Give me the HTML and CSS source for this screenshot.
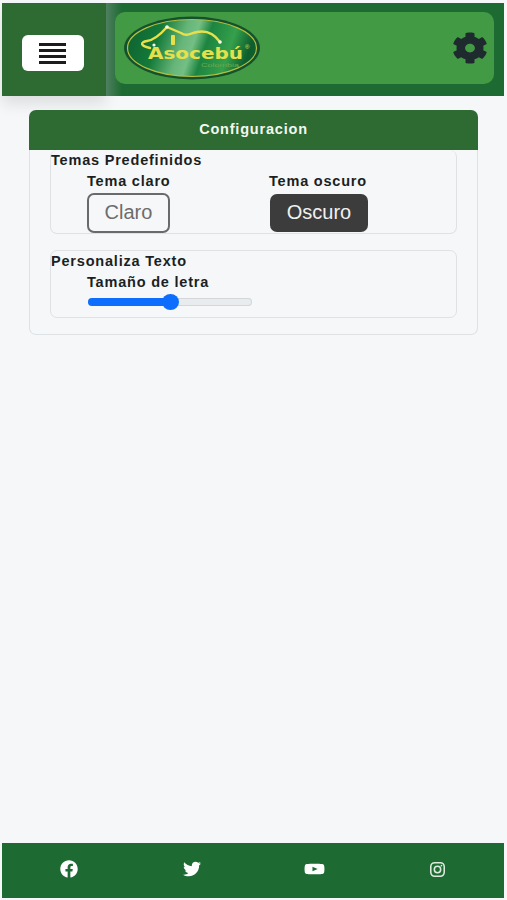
FILE: index.html
```html
<!DOCTYPE html>
<html lang="es">
<head>
    <meta charset="UTF-8">
    <meta name="viewport" content="width=device-width, initial-scale=1.0">
    <title>Configuracion</title>
    <link rel="stylesheet" href="styles.css">
</head>
<body>
    <div class="app">
        <header class="topbar">
            <div class="menu-side">
                <button class="menu-btn" type="button" aria-label="Menu">
                    <span></span><span></span><span></span><span></span>
                </button>
            </div>
            <div class="brand-side">
                <div class="brand-bar">
                    <svg class="logo" viewBox="0 0 138 64" aria-label="Asocebú Colombia">
                        <defs>
                            <linearGradient id="logoFill" x1="0" x2="1" y1="0" y2="0.15">
                                <stop offset="0" stop-color="#0e5f2e"/>
                                <stop offset="0.28" stop-color="#137a3a"/>
                                <stop offset="0.47" stop-color="#66b578"/>
                                <stop offset="0.56" stop-color="#74bf84"/>
                                <stop offset="0.66" stop-color="#1c8440"/>
                                <stop offset="0.85" stop-color="#35a04c"/>
                                <stop offset="1" stop-color="#0e5f2e"/>
                            </linearGradient>
                        </defs>
                        <ellipse cx="69" cy="32" rx="68" ry="31.5" fill="#14512c"/>
                        <ellipse cx="69" cy="32" rx="64.5" ry="28.5" fill="url(#logoFill)" stroke="#b4c03e" stroke-width="1.2"/>
                        <path class="logo-line" d="M27 32 C17 30 17 26 24 25 C31 24 37 19 44 11 L58 17 C64 21 68 17 74 16 C84 14 92 19 97 26"/>
                        <rect x="48" y="19" width="4" height="10" rx="1" fill="#e8e04a"/>
                        <circle class="logo-spark" cx="44" cy="11" r="1.8"/>
                        <circle class="logo-spark" cx="31" cy="29" r="1.6"/>
                        <circle class="logo-spark" cx="97" cy="26" r="1.8"/>
                        <circle class="logo-spark" cx="117" cy="40" r="1.3"/>
                        <text class="logo-name" x="25" y="43" textLength="95" lengthAdjust="spacingAndGlyphs">Asocebú</text>
                        <text class="logo-reg" x="122" y="33">®</text>
                        <text class="logo-sub" x="78" y="51" textLength="38" lengthAdjust="spacingAndGlyphs">Colombia</text>
                    </svg>
                    <svg class="gear" viewBox="0 0 512 512" preserveAspectRatio="none" aria-label="Ajustes">
                        <path d="M487.4 315.7l-42.6-24.6c4.3-23.2 4.3-47 0-70.2l42.6-24.6c4.9-2.8 7.1-8.6 5.5-14-11.1-35.6-30-67.8-54.7-94.6-3.8-4.1-10-5.1-14.8-2.3L380.8 110c-17.9-15.4-38.5-27.3-60.8-35.1V25.8c0-5.6-3.9-10.5-9.4-11.7-36.7-8.2-74.3-7.8-109.2 0-5.5 1.2-9.4 6.1-9.4 11.7V75c-22.2 7.9-42.8 19.8-60.8 35.1L88.7 85.5c-4.9-2.8-11-1.9-14.8 2.3-24.7 26.7-43.6 58.9-54.7 94.6-1.7 5.4.6 11.2 5.5 14L67.3 221c-4.3 23.2-4.3 47 0 70.2l-42.6 24.6c-4.9 2.8-7.1 8.6-5.5 14 11.1 35.6 30 67.8 54.7 94.6 3.8 4.1 10 5.1 14.8 2.3l42.6-24.6c17.9 15.4 38.5 27.3 60.8 35.1v49.2c0 5.6 3.9 10.5 9.4 11.7 36.7 8.2 74.3 7.8 109.2 0 5.5-1.2 9.4-6.1 9.4-11.7v-49.2c22.2-7.9 42.8-19.8 60.8-35.1l42.6 24.6c4.9 2.8 11 1.9 14.8-2.3 24.7-26.7 43.6-58.9 54.7-94.6 1.5-5.5-.7-11.3-5.6-14.1zM256 326c-38.6 0-70-31.4-70-70s31.4-70 70-70 70 31.4 70 70-31.4 70-70 70z"/>
                    </svg>
                </div>
            </div>
        </header>

        <main class="content">
            <section class="card">
                <h1 class="card-title">Configuracion</h1>
                <div class="card-body">
                    <div class="group">
                        <h2 class="group-title">Temas Predefinidos</h2>
                        <div class="theme-row">
                            <div class="theme-col theme-light">
                                <label class="field-label">Tema claro</label>
                                <button class="btn btn-light" type="button">Claro</button>
                            </div>
                            <div class="theme-col">
                                <label class="field-label">Tema oscuro</label>
                                <button class="btn btn-dark" type="button">Oscuro</button>
                            </div>
                        </div>
                    </div>
                    <div class="group group-text">
                        <h2 class="group-title">Personaliza Texto</h2>
                        <div class="range-field">
                            <label class="field-label">Tamaño de letra</label>
                            <div class="range">
                                <div class="range-fill" style="width: 50%"></div>
                                <div class="range-thumb"></div>
                            </div>
                        </div>
                    </div>
                </div>
            </section>
        </main>

        <footer class="footer">
            <svg class="social" viewBox="0 0 512 512" aria-label="Facebook"><path d="M504 256C504 119 393 8 256 8S8 119 8 256c0 123.8 90.7 226.4 209.3 245V327.7h-63V256h63v-54.6c0-62.2 37-96.5 93.7-96.5 27.1 0 55.5 4.8 55.5 4.8v61h-31.3c-30.8 0-40.4 19.1-40.4 38.7V256h68.8l-11 71.7h-57.8V501C413.3 482.4 504 379.8 504 256z"/></svg>
            <svg class="social" viewBox="0 0 512 512" aria-label="Twitter"><path d="M459.4 151.7c.3 4.5.3 9.1.3 13.6 0 138.7-105.6 298.6-298.6 298.6-59.5 0-114.7-17.2-161.1-47.1 8.4 1 16.6 1.3 25.3 1.3 49.1 0 94.2-16.6 130.3-44.8-46.1-1-84.8-31.2-98.1-72.8 6.5 1 13 1.6 19.8 1.6 9.4 0 18.8-1.3 27.6-3.6-48.1-9.7-84.1-52-84.1-103v-1.3c14 7.8 30.2 12.7 47.4 13.3-28.3-18.8-46.8-51-46.8-87.4 0-19.5 5.2-37.4 14.3-53 51.7 63.7 129.3 105.3 216.4 109.8-1.6-7.8-2.6-15.9-2.6-24 0-57.8 46.8-104.9 104.9-104.9 30.2 0 57.5 12.7 76.7 33.1 23.7-4.5 46.5-13.3 66.6-25.3-7.8 24-24.4 44.8-46.1 57.8 21.1-2.3 41.6-8.1 60.4-16.2-14.3 20.8-32.2 39.3-52.6 54.3z"/></svg>
            <svg class="social social-yt" viewBox="0 0 576 512" preserveAspectRatio="none" aria-label="YouTube"><path d="M549.7 124.1c-6.3-23.7-24.8-42.3-48.3-48.6C458.8 64 288 64 288 64S117.2 64 74.6 75.5c-23.5 6.3-42 24.9-48.3 48.6C14.9 167 14.9 256.4 14.9 256.4s0 89.4 11.4 132.3c6.3 23.7 24.8 41.5 48.3 47.8C117.2 448 288 448 288 448s170.8 0 213.4-11.5c23.5-6.3 42-24.2 48.3-47.8 11.4-42.9 11.4-132.3 11.4-132.3s0-89.4-11.4-132.3zM232.1 337.6V175.2l142.7 81.2-142.7 81.2z"/></svg>
            <svg class="social social-insta" viewBox="0 0 24 24" aria-label="Instagram"><rect x="2.5" y="2.5" width="19" height="19" rx="5.5"/><circle cx="12" cy="12" r="4.5"/><circle class="insta-dot" cx="17.6" cy="6.4" r="1.2"/></svg>
        </footer>
    </div>
</body>
</html>
```

FILE: styles.css
```css
* {
    box-sizing: border-box;
}
body {
    margin: 0;
    font-family: "Liberation Sans", Arial, sans-serif;
    background-color: #f5f7f9;
    color: #1c1f22;
}
.app {
    display: flex;
    flex-direction: column;
    height: 900px;
    padding: 3px 3px 2px 2px;
}
.topbar {
    display: flex;
    height: 93px;
    background-color: #1d6a32;
}
.menu-side {
    width: 104px;
    display: flex;
    align-items: center;
    justify-content: center;
    padding: 7px 3px 0 0;
    background-color: #2d6b33;
    box-shadow: 0 8px 14px rgba(0, 0, 0, 0.1);
}
.menu-btn {
    width: 62px;
    height: 36px;
    display: flex;
    flex-direction: column;
    align-items: center;
    justify-content: center;
    gap: 3px;
    padding: 0;
    border: 0;
    border-radius: 6px;
    background-color: #fff;
}
.menu-btn span {
    display: block;
    width: 27px;
    height: 3px;
    background-color: #1c1c1c;
}
.brand-side {
    flex: 1;
    padding: 9px 10px 12px 9px;
    background: linear-gradient(to right, #4f8060 0, #1d6a32 16px);
}
.brand-bar {
    height: 72px;
    display: flex;
    align-items: center;
    justify-content: space-between;
    padding: 0 6px 0 8px;
    border-radius: 10px;
    background-color: #439a45;
}
.logo {
    width: 138px;
    height: 64px;
}
.logo-line {
    fill: none;
    stroke: #e8e04a;
    stroke-width: 2.4;
    stroke-linecap: round;
    stroke-linejoin: round;
}
.logo-spark {
    fill: #f6f8ee;
}
.logo-name {
    font-family: "DejaVu Sans", sans-serif;
    font-size: 16.5px;
    font-weight: 700;
    fill: #e8e04a;
}
.logo-reg {
    font-size: 6px;
    fill: #e8e04a;
}
.logo-sub {
    font-size: 6px;
    fill: #6fa94f;
}
.gear {
    width: 36px;
    height: 32px;
    fill: #1f2a2e;
}
.content {
    flex: 1;
    padding: 14px 26px 0 27px;
}
.card {
    border: 1px solid #dfe2e5;
    border-top: 0;
    border-radius: 7px;
    padding-bottom: 16px;
}
.card-title {
    height: 40px;
    margin: 0 -1px;
    border-radius: 7px 7px 0 0;
    background-color: #2d6b33;
    color: #f4f7ee;
    font-size: 14.5px;
    line-height: 38px;
    text-align: center;
    letter-spacing: 0.8px;
}
.card-body {
    display: flex;
    flex-direction: column;
    gap: 16px;
    padding: 0 20px;
}
.group {
    height: 84px;
    border: 1px solid #dfe2e5;
    border-top: 0;
    border-radius: 7px;
}
.group-text {
    height: 68px;
    border-top: 1px solid #dfe2e5;
}
.group-title {
    margin: 0;
    font-size: 14.5px;
    line-height: 20px;
    font-weight: 700;
    letter-spacing: 0.8px;
}
.theme-row {
    display: flex;
    padding-left: 36px;
}
.theme-col {
    display: flex;
    flex-direction: column;
    align-items: flex-start;
}
.theme-light {
    width: 182px;
}
.field-label {
    font-size: 14.5px;
    line-height: 23px;
    font-weight: 700;
    letter-spacing: 0.8px;
}
.btn {
    padding: 0 0 2px;
    border-radius: 7px;
    font-family: inherit;
    font-size: 20px;
}
.btn-light {
    width: 83px;
    height: 40px;
    border: 2px solid #6a6a6a;
    background-color: transparent;
    color: #6c6c6c;
}
.btn-dark {
    width: 98px;
    height: 38px;
    margin: 1px 0 0 1px;
    border: 0;
    background-color: #3c3c3c;
    color: #f0f0f0;
}
.range-field {
    padding-left: 36px;
}
.range {
    position: relative;
    width: 164px;
    height: 8px;
    margin: 4px 0 0 1px;
    border-radius: 4px;
    background-color: #e9ecef;
    box-shadow: inset 0 0 0 1px #d4d6d8;
}
.range-fill {
    height: 8px;
    border-radius: 4px;
    background-color: #0d6efd;
}
.range-thumb {
    position: absolute;
    left: 74px;
    top: -4px;
    width: 17px;
    height: 16px;
    border-radius: 50%;
    background-color: #0d6efd;
}
.footer {
    height: 55px;
    display: grid;
    grid-template-columns: repeat(4, 1fr);
    justify-items: center;
    align-items: center;
    background-color: #1d6a32;
    padding: 0 5px 3px 6px;
}
.social {
    width: 18px;
    height: 18px;
    fill: #fff;
}
.social-yt {
    width: 21px;
    height: 14px;
}
.social-insta {
    width: 17px;
    height: 17px;
    fill: none;
    stroke: #dfeadf;
    stroke-width: 2.2;
}
.insta-dot {
    fill: #dfeadf;
    stroke: none;
}
```
